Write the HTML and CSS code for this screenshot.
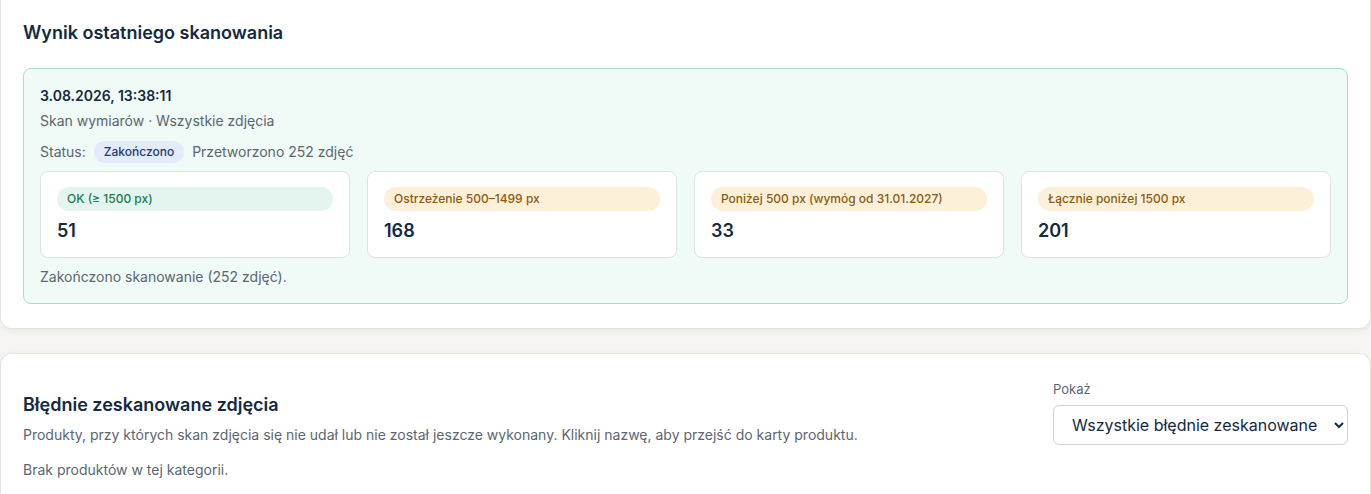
FILE: index.html
```html
<html lang="pl">
  <head>
    <meta charset="utf-8">
    <meta name="viewport" content="width=device-width, initial-scale=1">
    <link rel="stylesheet" href="styles.css">
  </head>
  <body>
  <div class="page">
    <div class="card card__top">
      <h2 class="card_title">Wynik ostatniego skanowania</h2>
      <div class="scan">
        <div class="scan_date">3.08.2026, 13:38:11</div>
        <div class="scan_meta">Skan wymiarów · Wszystkie zdjęcia</div>
        <div class="scan_status">
          <span>Status:</span>
          <span class="pill pill__blue">Zakończono</span>
          <span>Przetworzono 252 zdjęć</span>
        </div>
        <div class="stats">
          <div class="stat">
            <div class="stat_label stat_label__ok">OK (≥ 1500 px)</div>
            <div class="stat_value">51</div>
          </div>
          <div class="stat">
            <div class="stat_label stat_label__warn">Ostrzeżenie 500–1499 px</div>
            <div class="stat_value">168</div>
          </div>
          <div class="stat">
            <div class="stat_label stat_label__warn">Poniżej 500 px (wymóg od 31.01.2027)</div>
            <div class="stat_value">33</div>
          </div>
          <div class="stat">
            <div class="stat_label stat_label__warn">Łącznie poniżej 1500 px</div>
            <div class="stat_value">201</div>
          </div>
        </div>
        <div class="scan_footer">Zakończono skanowanie (252 zdjęć).</div>
      </div>
    </div>

    <div class="card card__bottom">
      <div class="errors_head">
        <div class="errors_info">
          <h2 class="card_title">Błędnie zeskanowane zdjęcia</h2>
          <p class="errors_desc">Produkty, przy których skan zdjęcia się nie udał lub nie został jeszcze wykonany. Kliknij nazwę, aby przejść do karty produktu.</p>
        </div>
        <label class="filter">
          <span class="filter_label">Pokaż</span>
          <select class="filter_select">
            <option>Wszystkie błędnie zeskanowane</option>
          </select>
        </label>
      </div>
      <p class="errors_empty">Brak produktów w tej kategorii.</p>
    </div>
  </div>
</body>
</html>
```

FILE: styles.css
```css
html, body {
  padding: 0px; margin: 0px;
  font-family: Inter, "Noto Sans", sans-serif;
  background: #f6f5f2;
  color: #132a40;
}

.page {
  margin-top: -2px;
  display: flex;
  flex-direction: column;
  gap: 24px;
}

.card {
  background: #fff;
  border: 1px solid #e6e4df;
  border-radius: 12px;
  box-shadow: 0 2px 6px rgba(0, 0, 0, 0.06);
  padding: 23px 22px 24px 22px;
}

.card__top {
  border-top: none;
  border-top-left-radius: 0;
  border-top-right-radius: 0;
}

.card_title {
  margin: 0;
  font-size: 18px;
  line-height: 24px;
  font-weight: 600;
  color: #132a40;
}

.scan {
  margin-top: 23px;
  background: #f0faf7;
  border: 1px solid #a9dccb;
  border-radius: 8px;
  padding: 17px 16px 16px 16px;
  font-size: 14px;
  line-height: 20px;
  color: #5b6670;
}

.scan_date {
  font-weight: 600;
  color: #132a40;
}

.scan_meta {
  margin-top: 5px;
}

.scan_status {
  margin-top: 10px;
  display: flex;
  align-items: center;
  gap: 8px;
}

.pill {
  display: inline-block;
  font-size: 12px;
  line-height: 22px;
  padding: 0 10px;
  border-radius: 11px;
  font-weight: 500;
}

.pill__blue {
  background: #e2ebf9;
  color: #1f3a6b;
}

.stats {
  margin-top: 8px;
  display: grid;
  grid-template-columns: repeat(4, 1fr);
  gap: 17px;
}

.stat {
  background: #fff;
  border: 1px solid #dde3e5;
  border-radius: 8px;
  padding: 15px 16px 14px 16px;
}

.stat_label {
  font-size: 12px;
  line-height: 24px;
  padding: 0 10px;
  border-radius: 12px;
  font-weight: 500;
}

.stat_label__ok {
  background: #e3f5ee;
  color: #1d7a53;
}

.stat_label__warn {
  background: #fdf0d9;
  color: #8a5a14;
}

.stat_value {
  margin-top: 8px;
  font-size: 18px;
  line-height: 24px;
  font-weight: 600;
  color: #132a40;
}

.scan_footer {
  margin-top: 9px;
}

.card__bottom {
  padding-top: 26px;
  border-bottom: none;
  border-bottom-left-radius: 0;
  border-bottom-right-radius: 0;
  min-height: 200px;
}

.errors_head {
  display: flex;
  align-items: flex-end;
  justify-content: space-between;
  gap: 24px;
}

.errors_desc {
  margin: 8px 0 0 0;
  font-size: 14px;
  line-height: 20px;
  color: #5b6670;
}

.filter {
  display: flex;
  flex-direction: column;
  gap: 7px;
  width: 295px;
}

.filter_label {
  font-size: 13px;
  line-height: 18px;
  color: #5b6670;
}

.filter_select {
  height: 40px;
  border: 1px solid #cfd2d4;
  border-radius: 6px;
  background: #fff;
  padding: 0 6px 0 14px;
  font-family: Inter, "Noto Sans", sans-serif;
  font-size: 16px;
  color: #132a40;
}

.errors_empty {
  margin: 15px 0 0 0;
  font-size: 14px;
  line-height: 20px;
  color: #5b6670;
}
```
